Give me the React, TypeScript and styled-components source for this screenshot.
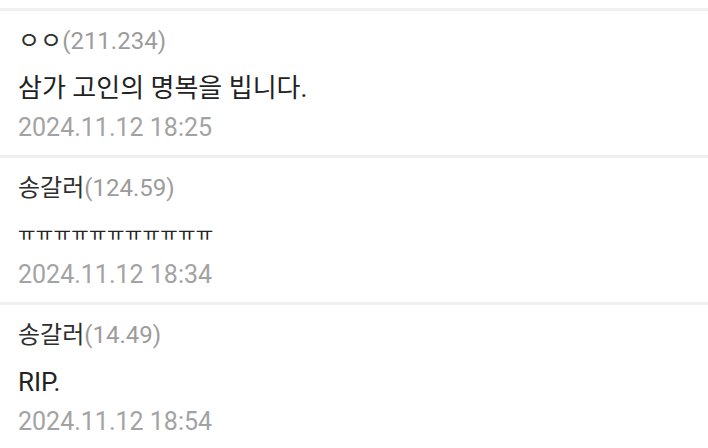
import React from "react";
import styled, { createGlobalStyle } from "styled-components";

const GlobalStyle = createGlobalStyle`
  html, body {
    margin: 0;
    padding: 0;
    background: #ffffff;
  }
  body {
    font-family: Roboto, "Noto Sans CJK KR", "Noto Sans", sans-serif;
    -webkit-font-smoothing: antialiased;
  }
`;

const List = styled.div`
  width: 708px;
  height: 448px;
  overflow: hidden;
  padding-top: 8px;
  box-sizing: border-box;
  background: #ffffff;
`;

const Comment = styled.div`
  display: flex;
  flex-direction: column;
  border-top: 3px solid #f0f0f0;
  padding: 10px 18px 7px;
  height: 147px;
  box-sizing: border-box;
`;

const NameLine = styled.div`
  font-size: 24px;
  line-height: 40px;
  color: #2e2e2e;
  white-space: nowrap;
`;

const Ip = styled.span`
  color: #9c9c9c;
`;

const Body = styled.div<{ $jamo?: boolean }>`
  margin-top: 7px;
  font-size: ${(p) => (p.$jamo ? "19px" : "26px")};
  line-height: 40px;
  color: #222222;
  white-space: nowrap;
  letter-spacing: ${(p) => (p.$jamo ? "0.3px" : "0")};
`;

const DateLine = styled.div`
  font-size: 25px;
  line-height: 40px;
  color: #a3a3a3;
  white-space: nowrap;
`;

type Item = { name: string; ip: string; text: string; date: string; jamo?: boolean };

const items: Item[] = [
  { name: "ㅇㅇ", ip: "(211.234)", text: "삼가 고인의 명복을 빕니다.", date: "2024.11.12 18:25" },
  { name: "송갈러", ip: "(124.59)", text: "ㅠㅠㅠㅠㅠㅠㅠㅠㅠㅠㅠ", date: "2024.11.12 18:34", jamo: true },
  { name: "송갈러", ip: "(14.49)", text: "RIP.", date: "2024.11.12 18:54" },
];

export default function App() {
  return (
    <>
      <GlobalStyle />
      <List>
        {items.map((it, i) => (
          <Comment key={i}>
            <NameLine>
              {it.name}
              <Ip>{it.ip}</Ip>
            </NameLine>
            <Body $jamo={it.jamo}>{it.text}</Body>
            <DateLine>{it.date}</DateLine>
          </Comment>
        ))}
      </List>
    </>
  );
}
